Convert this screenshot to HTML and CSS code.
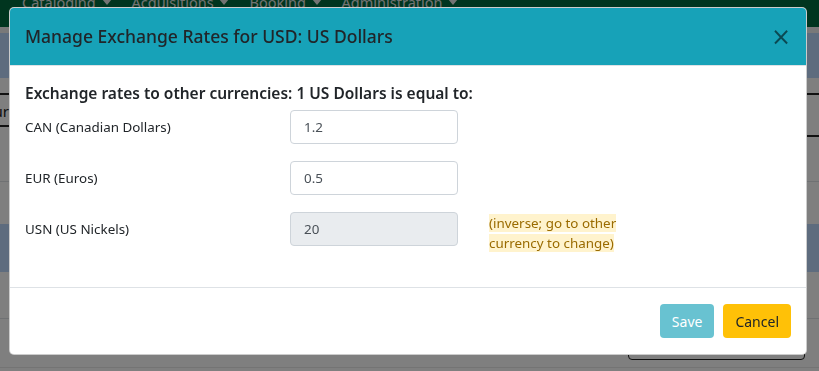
FILE: index.html
```html
<!DOCTYPE html>
<html lang="en">
<head>
  <meta charset="UTF-8" />
  <meta name="viewport" content="width=device-width, initial-scale=1.0"/>
  <title>Currencies</title>
  <link rel="stylesheet" href="styles.css">
</head>
<body>
  <!-- page behind the dialog -->
  <div class="page">
    <nav class="navbar">
      <a class="nav-link">Cataloging <span class="caret"></span></a>
      <a class="nav-link">Acquisitions <span class="caret"></span></a>
      <a class="nav-link">Booking <span class="caret"></span></a>
      <a class="nav-link">Administration <span class="caret"></span></a>
    </nav>
    <div class="subbar"></div>
    <div class="banner"></div>
    <div class="toolbar">
      <div class="filter-box">Currency</div>
      <div class="tool-btn"><span class="tool-badge"></span></div>
    </div>
    <div class="table-line"></div>
    <div class="banner banner-row"></div>
    <div class="table-line table-line-low"></div>
    <div class="page-actions">
      <div class="outline-btn"></div>
    </div>
    <div class="page-bottom"></div>
  </div>

  <div class="backdrop"></div>

  <div class="modal">
    <div class="modal-header">
      <h5 class="modal-title">Manage Exchange Rates for USD: US Dollars</h5>
      <button class="close" type="button">&times;</button>
    </div>

    <div class="modal-body">
      <h6 class="rates-heading">Exchange rates to other currencies: 1 US Dollars is equal to:</h6>

      <div class="rate-row">
        <label class="rate-label" for="rate-can">CAN (Canadian Dollars)</label>
        <input class="form-control" id="rate-can" type="text" value="1.2">
      </div>

      <div class="rate-row">
        <label class="rate-label" for="rate-eur">EUR (Euros)</label>
        <input class="form-control" id="rate-eur" type="text" value="0.5">
      </div>

      <div class="rate-row">
        <label class="rate-label" for="rate-usn">USN (US Nickels)</label>
        <input class="form-control" id="rate-usn" type="text" value="20" disabled>
        <div class="rate-note"><mark>(inverse; go to other currency to change)</mark></div>
      </div>
    </div>

    <div class="modal-footer">
      <button class="btn btn-info" type="button" disabled>Save</button>
      <button class="btn btn-warning" type="button">Cancel</button>
    </div>
  </div>
</body>
</html>
```

FILE: styles.css
```css
* {
  box-sizing: border-box;
}

body {
  margin: 0;
  padding: 0;
  font-family: "Noto Sans", "Open Sans", sans-serif;
  font-size: 13.4px;
  color: #212529;
  background-color: #ffffff;
  height: 371px;
  overflow: hidden;
}

/* background page */
.navbar {
  height: 27px;
  background: #006b3e;
  display: flex;
  padding-left: 22px;
  overflow: hidden;
}

.nav-link {
  color: #e6e6e6;
  font-size: 14.5px;
  line-height: 16px;
  margin-top: -6px;
  margin-right: 20px;
}

.caret {
  display: inline-block;
  width: 0;
  height: 0;
  border-left: 5px solid transparent;
  border-right: 5px solid transparent;
  border-top: 6px solid #e6e6e6;
  vertical-align: 3px;
  margin-left: 2px;
}

.subbar {
  height: 6px;
  background: #f2f2f2;
}

.banner {
  height: 45px;
  background: #bcd9fc;
}

.toolbar {
  margin-top: 15px;
  height: 44px;
  display: flex;
  justify-content: space-between;
}

.filter-box {
  margin-left: -22px;
  height: 34px;
  padding: 6px;
  border-top: 2px solid #222;
  border-bottom: 2px solid #222;
  width: 200px;
  color: #222;
  font-size: 15px;
  line-height: 20px;
}

.tool-btn {
  width: 60px;
  margin-right: -20px;
  border-top: 2px solid #222;
  border-bottom: 2px solid #222;
  padding: 16px 0 0 58px;
}

.tool-badge {
  display: block;
  width: 6px;
  height: 10px;
  background: #f0b400;
}

.table-line {
  margin-top: 44px;
  border-top: 1px solid #dee2e6;
}

.banner-row {
  margin-top: 42px;
  height: 48px;
}

.table-line-low {
  margin-top: 46px;
}

.page-actions {
  display: flex;
  justify-content: flex-end;
  padding-right: 14px;
  padding-top: 6px;
}

.outline-btn {
  width: 177px;
  height: 35px;
  border: 1px solid #222;
  border-radius: 4px;
}

.page-bottom {
  margin-top: 7px;
  border-top: 1px solid #e8e8e8;
}

.backdrop {
  position: fixed;
  top: 0;
  left: 0;
  right: 0;
  bottom: 0;
  background: rgba(0, 0, 0, 0.5);
}

/* dialog */
.modal {
  position: fixed;
  top: 7px;
  left: 9px;
  width: 798px;
  background: #ffffff;
  border: 1px solid rgba(0, 0, 0, 0.2);
  border-radius: 5px;
  overflow: hidden;
}

.modal-header {
  background: #17a2b8;
  height: 58px;
  padding: 0 15px;
  display: flex;
  align-items: center;
  justify-content: space-between;
  border-bottom: 1px solid #dee2e6;
}

.modal-title {
  margin: 0;
  font-size: 17.5px;
  font-weight: 500;
  line-height: 27px;
  color: #212529;
}

.close {
  background: none;
  border: none;
  padding: 0;
  margin-right: 0;
  font-family: "DejaVu Sans", sans-serif;
  font-size: 24px;
  font-weight: normal;
  line-height: 1;
  color: #000000;
  opacity: 0.55;
}

.modal-body {
  padding: 17px 15px 17px;
}

.rates-heading {
  margin: 0 0 6px;
  font-size: 15.5px;
  font-weight: 600;
  line-height: 21px;
}

.rate-row {
  display: grid;
  grid-template-columns: 265px 168px 1fr;
  align-items: start;
  margin-bottom: 17px;
}

.rate-label {
  line-height: 34px;
}

.form-control {
  height: 34px;
  width: 100%;
  padding: 6px 13px;
  font-family: inherit;
  font-size: 13.4px;
  color: #495057;
  background: #ffffff;
  border: 1px solid #ced4da;
  border-radius: 4px;
}

.form-control:disabled {
  background: #e9ecef;
}

.rate-note {
  margin-left: 31px;
  width: 130px;
  padding-top: 1px;
  line-height: 20px;
}

.rate-note mark {
  background: #fff3cd;
  color: #9a6b00;
}

.modal-footer {
  border-top: 1px solid #dee2e6;
  padding: 16px 15px;
  display: flex;
  justify-content: flex-end;
  gap: 9px;
}

.btn {
  height: 34px;
  padding: 0 12px;
  font-family: inherit;
  font-size: 14px;
  border: none;
  border-radius: 4px;
}

.btn-info {
  background: #17a2b8;
  color: #ffffff;
  opacity: 0.65;
}

.btn-warning {
  background: #ffc107;
  color: #212529;
}
```
